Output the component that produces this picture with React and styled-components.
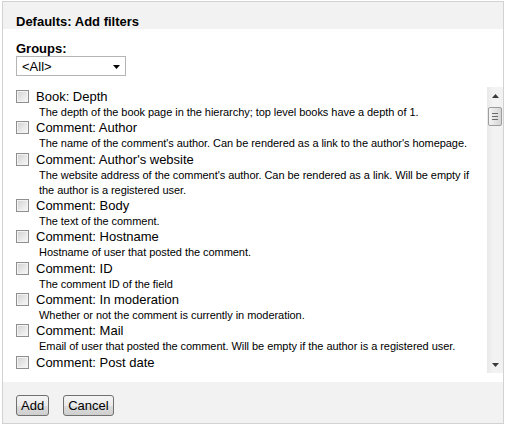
import React from 'react';
import styled, { createGlobalStyle } from 'styled-components';

const filters = [
    { title: 'Book: Depth', desc: 'The depth of the book page in the hierarchy; top level books have a depth of 1.' },
    { title: 'Comment: Author', desc: "The name of the comment's author. Can be rendered as a link to the author's homepage." },
    { title: "Comment: Author's website", desc: "The website address of the comment's author. Can be rendered as a link. Will be empty if the author is a registered user." },
    { title: 'Comment: Body', desc: 'The text of the comment.' },
    { title: 'Comment: Hostname', desc: 'Hostname of user that posted the comment.' },
    { title: 'Comment: ID', desc: 'The comment ID of the field' },
    { title: 'Comment: In moderation', desc: 'Whether or not the comment is currently in moderation.' },
    { title: 'Comment: Mail', desc: 'Email of user that posted the comment. Will be empty if the author is a registered user.' },
    { title: 'Comment: Post date', desc: 'Date and time of when the comment was posted.' },
];

const GlobalStyle = createGlobalStyle`
body{
    margin: 0;
    background: #fff;
    font-family: "Liberation Sans", Arial, sans-serif;
    color: #000;
}
`;

const Arrow = ({ down }) => (
    <svg width="7" height="4" viewBox="0 0 7 4">
        <polygon points={down ? '0,0 7,0 3.5,4' : '0,4 7,4 3.5,0'} fill="#3a3a3a" />
    </svg>
);

const App = () => {
    return (
        <>
            <GlobalStyle />
            <Frame>
                <Header>Defaults: Add filters</Header>
                <Body>
                    <Label>Groups:</Label>
                    <SelectBox>
                        <span>&lt;All&gt;</span>
                        <svg width="7" height="4" viewBox="0 0 7 4">
                            <polygon points="0,0 7,0 3.5,4" fill="#000" />
                        </svg>
                    </SelectBox>
                    <ListArea>
                        <Items>
                            {filters.map((f) => (
                                <Item key={f.title}>
                                    <TitleRow>
                                        <Check />
                                        <span>{f.title}</span>
                                    </TitleRow>
                                    <Desc>{f.desc}</Desc>
                                </Item>
                            ))}
                        </Items>
                        <Scrollbar>
                            <ScrollButton><Arrow /></ScrollButton>
                            <Thumb>
                                <i /><i /><i />
                            </Thumb>
                            <Track />
                            <ScrollButton><Arrow down /></ScrollButton>
                        </Scrollbar>
                    </ListArea>
                </Body>
                <Footer>
                    <Button>Add</Button>
                    <Button>Cancel</Button>
                </Footer>
            </Frame>
        </>
    );
}

const Frame = styled.div`
    margin: 1px 0 0 2px;
    width: 502px;
    height: 423px;
    box-sizing: border-box;
    border: 1px solid #d2d2d2;
    display: flex;
    flex-direction: column;
`;

const Header = styled.div`
    height: 27px;
    box-sizing: border-box;
    padding: 12px 13px 0;
    background: #f2f2f2;
    font-weight: bold;
    font-size: 13px;
    line-height: 15px;
`;

const Body = styled.div`
    padding: 12px 0 0 13px;
    display: flex;
    flex-direction: column;
`;

const Label = styled.div`
    font-weight: bold;
    font-size: 13px;
    line-height: 15px;
`;

const SelectBox = styled.div`
    width: 110px;
    height: 20px;
    box-sizing: border-box;
    border: 1px solid #b4b4b4;
    background: #fff;
    display: flex;
    align-items: center;
    justify-content: space-between;
    padding: 0 5px 0 5px;
    font-size: 13px;
    svg{
        margin-top: 1px;
    }
`;

const ListArea = styled.div`
    margin-top: 11px;
    height: 286px;
    display: flex;
`;

const Items = styled.div`
    flex: 1;
    overflow: hidden;
    padding: 2px 8px 0 0;
`;

const Item = styled.div`
    display: flex;
    flex-direction: column;
`;

const TitleRow = styled.div`
    display: flex;
    align-items: flex-start;
    font-size: 13px;
    line-height: 16px;
`;

const Check = styled.span`
    width: 13px;
    height: 13px;
    box-sizing: border-box;
    margin: 1px 7px 0 0;
    border: 1px solid #8e8f8f;
    background: linear-gradient(135deg, #d0d0d0 0%, #e8e8e8 55%, #f8f8f8 100%);
    box-shadow: inset 0 0 0 1px #f3f3f3;
    flex-shrink: 0;
`;

const Desc = styled.div`
    padding-left: 23px;
    font-size: 11px;
    line-height: 15.3px;
    letter-spacing: -0.05px;
`;

const Scrollbar = styled.div`
    width: 16px;
    display: flex;
    flex-direction: column;
    background: linear-gradient(90deg, #e9e9e9, #f3f3f3 40%, #f1f1f1);
`;

const ScrollButton = styled.div`
    height: 17px;
    display: flex;
    align-items: center;
    justify-content: center;
`;

const Thumb = styled.div`
    margin: 3px 1px 0;
    height: 19px;
    box-sizing: border-box;
    border: 1px solid #9c9c9c;
    border-radius: 2px;
    background: linear-gradient(90deg, #f4f4f4, #e4e4e4 50%, #d6d6d6);
    display: flex;
    flex-direction: column;
    align-items: center;
    justify-content: center;
    gap: 2px;
    i{
        display: block;
        width: 6px;
        height: 1px;
        background: #6a6a6a;
    }
`;

const Track = styled.div`
    flex: 1;
`;

const Footer = styled.div`
    margin-top: 9px;
    flex: 1;
    background: #f2f2f2;
    padding: 13px 0 0 13px;
    display: flex;
    align-items: flex-start;
    gap: 14px;
`;

const Button = styled.button`
    height: 21px;
    padding: 0 4px;
    border: 1px solid #707070;
    border-radius: 3px;
    background: linear-gradient(#f4f4f4 0%, #ebebeb 50%, #dddddd 51%, #cfcfcf 100%);
    font-family: "Liberation Sans", Arial, sans-serif;
    font-size: 13px;
    line-height: 19px;
    color: #000;
`;

export default App;
